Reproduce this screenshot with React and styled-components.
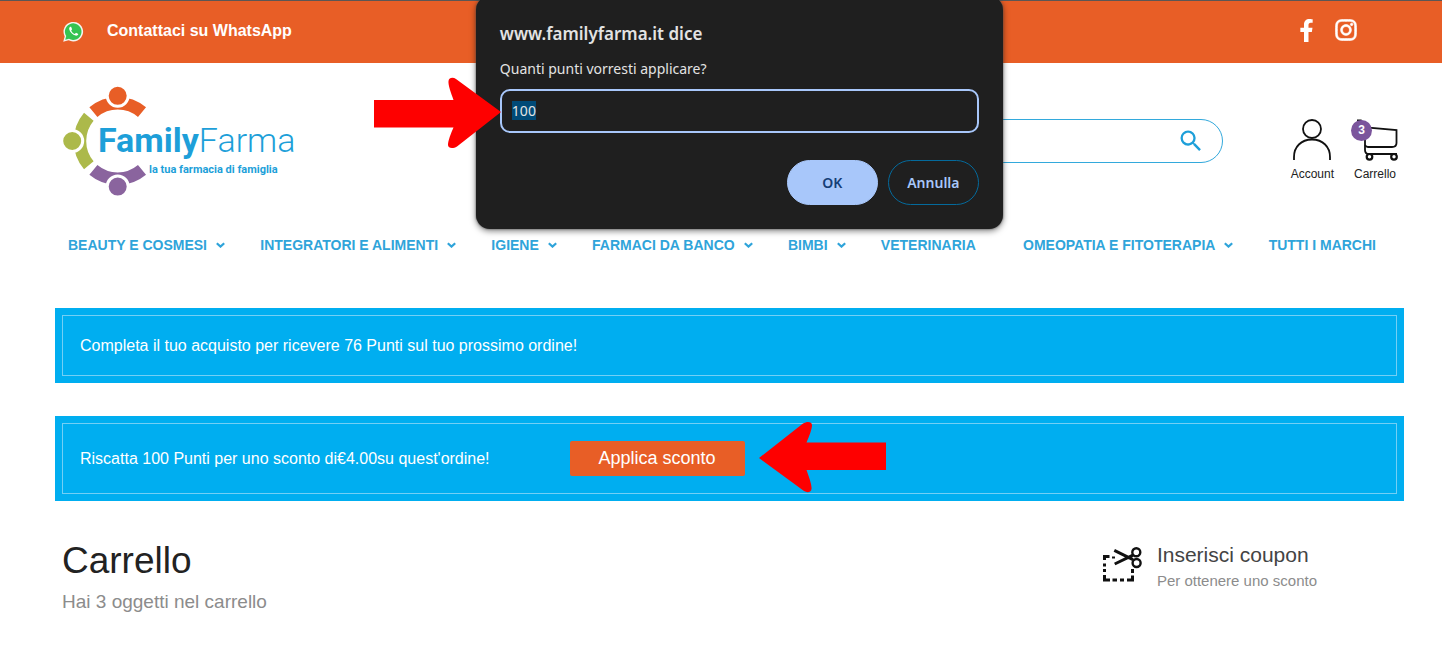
import React, { useEffect, useRef } from "react";
import styled, { createGlobalStyle } from "styled-components";
import { FaFacebookF, FaInstagram } from "react-icons/fa";
import { MdSearch } from "react-icons/md";

const GlobalStyle = createGlobalStyle`
  * {
    box-sizing: border-box;
  }

  body {
    margin: 0;
    background-color: white;
    color: #222;
    font-family: "Liberation Sans", Arial, sans-serif;
  }

  h1, h2, p {
    margin: 0;
    font-weight: 400;
  }

  a {
    color: inherit;
    text-decoration: none;
  }

  svg {
    display: block;
  }
`;

const Page = styled.div`
  position: relative;
`;

const TopBar = styled.div`
  display: flex;
  justify-content: space-between;
  align-items: center;
  height: 63px;
  padding: 0 84px 2px 62px;
  border-top: 1px solid #5c5654;
  background-color: #e85e26;
  color: white;
`;

const WhatsAppLink = styled.a`
  display: flex;
  align-items: center;
  gap: 22px;
  font-size: 16px;
  font-weight: 700;
`;

const SocialBox = styled.div`
  display: flex;
  align-items: center;
  gap: 16px;
  padding-bottom: 2px;
`;

const Container = styled.div`
  padding: 0 38px 0 55px;
`;

const Header = styled.header`
  display: flex;
  align-items: center;
  padding: 21px 5px 37px;
`;

const SearchForm = styled.form`
  display: flex;
  align-items: center;
  flex: 1;
  height: 44px;
  margin: 0 68px 0 240px;
  padding: 0 17px 0 24px;
  border: 1px solid #33a9dc;
  border-radius: 22px;
`;

const SearchInput = styled.input`
  flex: 1;
  min-width: 0;
  border: none;
  outline: none;
  background: none;
  font-size: 16px;
`;

const SearchButton = styled.button`
  padding: 0;
  border: none;
  background: none;
  color: #1d9fd9;
  cursor: pointer;
`;

const HeaderActions = styled.div`
  display: flex;
  gap: 17px;
  padding-top: 18px;
`;

const HeaderAction = styled.a`
  position: relative;
  display: flex;
  flex-direction: column;
  align-items: center;
  gap: 6px;
  font-size: 12px;
  line-height: 14px;
`;

const CartBadge = styled.span`
  position: absolute;
  top: 1px;
  left: 0;
  width: 21px;
  height: 21px;
  border-radius: 50%;
  background-color: #7b559c;
  color: white;
  font-size: 12px;
  font-weight: 700;
  line-height: 21px;
  text-align: center;
`;

const Nav = styled.nav`
  display: flex;
  justify-content: space-between;
  padding: 0 16px 0 13px;
  color: #2fa4da;
  font-size: 14px;
  font-weight: 700;
  line-height: 20px;
  white-space: nowrap;
`;

const NavItem = styled.a`
  display: flex;
  align-items: center;
  gap: 9px;
  padding-right: ${(props) => (props.$plain ? "12px" : "0")};
`;

const Banners = styled.div`
  display: flex;
  flex-direction: column;
  gap: 33px;
  padding: 53px 0 38px;
`;

const Banner = styled.div`
  padding: 7px;
  background-color: #00aef0;
`;

const BannerInner = styled.div`
  display: flex;
  align-items: center;
  gap: 80px;
  padding: ${(props) => (props.$tall ? "17px" : "20px")} 17px;
  border: 1px solid #73cff5;
  color: white;
  font-size: 16px;
  line-height: 19px;
`;

const ApplyBox = styled.div`
  position: relative;
`;

const ApplyButton = styled.button`
  display: block;
  height: 35px;
  padding: 0 29px;
  border: none;
  border-radius: 2px;
  background-color: #e85e26;
  color: white;
  font-family: inherit;
  font-size: 18px;
  cursor: pointer;
`;

const CartHead = styled.section`
  display: flex;
  justify-content: space-between;
  align-items: flex-start;
  padding: 0 87px 46px 7px;
`;

const CartTitle = styled.h1`
  font-size: 37px;
  line-height: 44px;
`;

const CartSubTitle = styled.p`
  padding-top: 7px;
  color: #8c8c8c;
  font-size: 19px;
  line-height: 24px;
`;

const CouponLink = styled.a`
  display: flex;
  gap: 15px;
  padding-top: 3px;
`;

const CouponIconBox = styled.div`
  padding-top: 4px;
`;

const CouponTitle = styled.h2`
  color: #444;
  font-size: 21px;
  line-height: 26px;
`;

const CouponText = styled.p`
  color: #8c8c8c;
  font-size: 15px;
  line-height: 26px;
`;

const Dialog = styled.div`
  position: absolute;
  top: -4px;
  left: 33%;
  width: 527px;
  padding: 26px 24px 24px;
  border-radius: 14px;
  background-color: #1f1f1f;
  box-shadow: 0 0 2px #555, 0 2px 6px rgba(0, 0, 0, 0.5);
  color: #e3e3e3;
  font-family: "Noto Sans", "Open Sans", sans-serif;
  z-index: 2;
`;

const DialogTitle = styled.h2`
  font-size: 17px;
  font-weight: 600;
  line-height: 24px;
`;

const DialogLabel = styled.label`
  display: block;
  padding: 13px 0 10px;
  font-size: 14px;
  line-height: 20px;
`;

const DialogInput = styled.input`
  display: block;
  width: 100%;
  height: 44px;
  padding: 0 10px 2px;
  border: 2px solid #a8c7fa;
  border-radius: 10px;
  outline: none;
  background-color: #1f1f1f;
  color: #e3e3e3;
  font-family: inherit;
  font-size: 14px;

  &::selection {
    background-color: #004a77;
    color: #e3e3e3;
  }
`;

const DialogButtons = styled.div`
  display: flex;
  justify-content: flex-end;
  gap: 10px;
  padding-top: 27px;
`;

const DialogButton = styled.button`
  width: 91px;
  height: 45px;
  border: 1px solid ${(props) => (props.$primary ? "#a8c7fa" : "#046a9c")};
  border-radius: 23px;
  background-color: ${(props) => (props.$primary ? "#a8c7fa" : "transparent")};
  color: ${(props) => (props.$primary ? "#153e76" : "#a8c7fa")};
  font-family: inherit;
  font-size: 14px;
  font-weight: 600;
  cursor: pointer;
`;

const InputArrow = styled.div`
  position: absolute;
  top: 81px;
  right: calc(100% - 25px);
`;

const ButtonArrow = styled.div`
  position: absolute;
  top: -20px;
  left: calc(100% + 14px);
  transform: rotate(180deg);
`;

const navItems = [
  { text: "BEAUTY E COSMESI", menu: true },
  { text: "INTEGRATORI E ALIMENTI", menu: true },
  { text: "IGIENE", menu: true },
  { text: "FARMACI DA BANCO", menu: true },
  { text: "BIMBI", menu: true },
  { text: "VETERINARIA", menu: false },
  { text: "OMEOPATIA E FITOTERAPIA", menu: true },
  { text: "TUTTI I MARCHI", menu: false },
];

const RedArrow = () => (
  <svg width="127" height="72" viewBox="0 0 127 72" aria-hidden="true">
    <path
      d="M0 23H79.5C77 16 74 8 74.5 4C75 0.5 79 0 82 2L127 35L83 69.5C79 72 74 71.5 74 68C74 64 77 56 79.5 50.5H0Z"
      fill="#fe0000"
    />
  </svg>
);

const ChevronIcon = () => (
  <svg width="9" height="6" viewBox="0 0 9 6" aria-hidden="true">
    <path d="M0.8 1.2L4.5 4.6L8.2 1.2" fill="none" stroke="currentColor" strokeWidth="2.2" />
  </svg>
);

const WhatsAppIcon = () => (
  <svg width="23" height="23" viewBox="0 0 23 23" aria-hidden="true">
    <path d="M1.2 21.8L2.7 16.4A9.8 9.8 0 1 1 6.6 20.3Z" fill="#f4f4f0" />
    <path d="M3.2 19.8L4.2 16.1A8.3 8.3 0 1 1 7 18.8Z" fill="#35c352" />
    <path
      d="M8.3 6.8C7.4 7.2 7 8.3 7.3 9.5C8 12.3 10.7 15 13.6 15.6C14.9 15.8 16.1 15 16.3 13.9L14 12.7L12.8 13.9C11.1 13.2 10 12.2 9.2 10.4L10.1 9.2L9.1 6.8Z"
      fill="white"
    />
  </svg>
);

const Logo = () => (
  <svg width="240" height="114" viewBox="0 0 240 114" role="img" aria-label="FamilyFarma">
    <g fill="none" strokeWidth="12.5">
      <path d="M33.4 28.1A37.8 37.8 0 0 1 82 28.1" stroke="#e85e26" />
      <path d="M28.8 32.7A37.8 37.8 0 0 0 28.8 81.3" stroke="#acb94a" />
      <path d="M33.4 85.9A37.8 37.8 0 0 0 82 85.9" stroke="#8a649e" />
    </g>
    <g stroke="white" strokeWidth="3">
      <circle cx="57.7" cy="11.8" r="10.5" fill="#e85e26" />
      <circle cx="12.2" cy="57" r="10.5" fill="#acb94a" />
      <circle cx="57.7" cy="102.6" r="10.5" fill="#8a649e" />
    </g>
    <g fill="#1d9fd9" fontFamily="Roboto, sans-serif">
      <text x="38" y="68" fontSize="34" fontWeight="700">
        Family<tspan fontWeight="300">Farma</tspan>
      </text>
      <text x="89" y="89" fontSize="11" fontWeight="700">
        la tua farmacia di famiglia
      </text>
    </g>
  </svg>
);

const AccountIcon = () => (
  <svg width="40" height="42" viewBox="0 0 40 42" fill="none" stroke="#111" strokeWidth="1.8" aria-hidden="true">
    <circle cx="20" cy="10" r="9" />
    <path d="M2 41V38C2 28 9 20.5 20 20.5S38 28 38 38V41" />
  </svg>
);

const CartIcon = () => (
  <svg width="48" height="42" viewBox="0 0 48 42" fill="none" stroke="#111" strokeWidth="1.8" aria-hidden="true">
    <path d="M6 1.5H10L15 8.5L45.5 11V24C45.5 27 44 28 41 28H17C15 28 14.5 27 14 26" />
    <path d="M14 9V31C14 34 15.5 35 18 35H46" />
    <circle cx="18.5" cy="37.8" r="2.8" fill="white" strokeWidth="2.2" />
    <circle cx="43" cy="37.8" r="2.8" fill="white" strokeWidth="2.2" />
  </svg>
);

const CouponIcon = () => (
  <svg width="40" height="36" viewBox="0 0 40 36" fill="none" stroke="#111" aria-hidden="true">
    <path
      d="M2.5 14V10.5H7.5M2.5 17.5V20.5M2.5 23V26M2.5 29V34H8M10.5 34H15M18 34H22M25 34H30.5V29.5M30.5 23V27"
      strokeWidth="3"
    />
    <path d="M10 11.5H13" strokeWidth="2" />
    <path d="M12.3 4.3L31 13.6M12.7 18L31 9.2" strokeWidth="3" />
    <circle cx="34.3" cy="6.2" r="4" strokeWidth="2.4" />
    <circle cx="34.6" cy="17" r="4" strokeWidth="2.4" />
  </svg>
);

const PointsDialog = () => {
  const inputRef = useRef(null);

  useEffect(() => {
    inputRef.current.focus();
    inputRef.current.select();
  }, []);

  return (
    <Dialog role="dialog" aria-labelledby="dialog-title">
      <DialogTitle id="dialog-title">www.familyfarma.it dice</DialogTitle>
      <DialogLabel htmlFor="points">Quanti punti vorresti applicare?</DialogLabel>
      <DialogInput id="points" ref={inputRef} type="text" defaultValue="100" />
      <DialogButtons>
        <DialogButton type="button" $primary>
          OK
        </DialogButton>
        <DialogButton type="button">Annulla</DialogButton>
      </DialogButtons>
      <InputArrow>
        <RedArrow />
      </InputArrow>
    </Dialog>
  );
};

export default function App() {
  return (
    <Page>
      <GlobalStyle />
      <TopBar>
        <WhatsAppLink href="#whatsapp">
          <WhatsAppIcon />
          Contattaci su WhatsApp
        </WhatsAppLink>
        <SocialBox>
          <a href="#facebook" aria-label="Facebook">
            <FaFacebookF size={23} />
          </a>
          <a href="#instagram" aria-label="Instagram">
            <FaInstagram size={24} stroke="currentColor" strokeWidth={14} />
          </a>
        </SocialBox>
      </TopBar>
      <Container>
        <Header>
          <a href="#home">
            <Logo />
          </a>
          <SearchForm role="search">
            <SearchInput type="search" aria-label="Cerca" />
            <SearchButton type="button" aria-label="Cerca">
              <MdSearch size={28} />
            </SearchButton>
          </SearchForm>
          <HeaderActions>
            <HeaderAction href="#account">
              <AccountIcon />
              Account
            </HeaderAction>
            <HeaderAction href="#carrello">
              <CartIcon />
              <CartBadge>3</CartBadge>
              Carrello
            </HeaderAction>
          </HeaderActions>
        </Header>
        <Nav>
          {navItems.map((item) => (
            <NavItem key={item.text} href="#menu" $plain={!item.menu}>
              {item.text}
              {item.menu && <ChevronIcon />}
            </NavItem>
          ))}
        </Nav>
        <Banners>
          <Banner>
            <BannerInner>
              <p>Completa il tuo acquisto per ricevere 76 Punti sul tuo prossimo ordine!</p>
            </BannerInner>
          </Banner>
          <Banner>
            <BannerInner $tall>
              <p>Riscatta 100 Punti per uno sconto di€4.00su quest'ordine!</p>
              <ApplyBox>
                <ApplyButton type="button">Applica sconto</ApplyButton>
                <ButtonArrow>
                  <RedArrow />
                </ButtonArrow>
              </ApplyBox>
            </BannerInner>
          </Banner>
        </Banners>
        <CartHead>
          <div>
            <CartTitle>Carrello</CartTitle>
            <CartSubTitle>Hai 3 oggetti nel carrello</CartSubTitle>
          </div>
          <CouponLink href="#coupon">
            <CouponIconBox>
              <CouponIcon />
            </CouponIconBox>
            <div>
              <CouponTitle>Inserisci coupon</CouponTitle>
              <CouponText>Per ottenere uno sconto</CouponText>
            </div>
          </CouponLink>
        </CartHead>
      </Container>
      <PointsDialog />
    </Page>
  );
}
